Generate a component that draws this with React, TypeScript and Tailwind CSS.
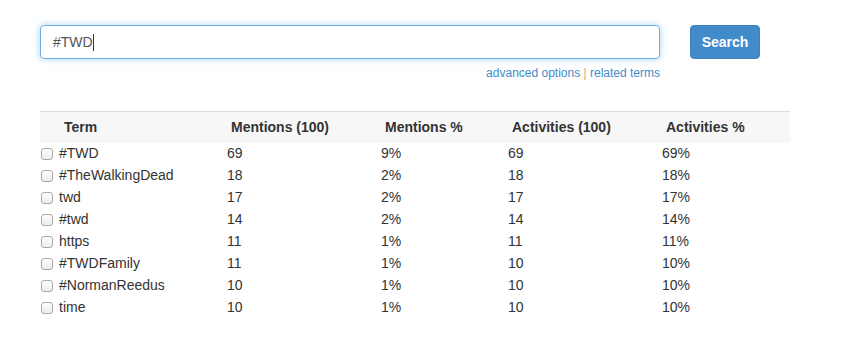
import React from "react";

const rows = [
  ["#TWD", "69", "9%", "69", "69%"],
  ["#TheWalkingDead", "18", "2%", "18", "18%"],
  ["twd", "17", "2%", "17", "17%"],
  ["#twd", "14", "2%", "14", "14%"],
  ["https", "11", "1%", "11", "11%"],
  ["#TWDFamily", "11", "1%", "10", "10%"],
  ["#NormanReedus", "10", "1%", "10", "10%"],
  ["time", "10", "1%", "10", "10%"],
];

export default function App() {
  return (
    <div className="w-[842px] h-[344px] bg-white text-[14px] text-[#333] font-['Liberation_Sans',Arial,sans-serif]">
      <div className="pt-[25px] pl-[40px] flex">
        <div className="flex flex-col items-end">
          <div className="w-[620px] h-[34px] border border-[#66afe9] rounded-[4px] shadow-[0_0_7px_rgba(102,175,233,0.55)] flex items-center pl-[12px] text-[#555]">
            <span>#TWD</span>
            <span className="w-px h-[17px] bg-[#333]" />
          </div>
          <div className="mt-[6px] text-[12px] text-[#428bca] leading-[16px]">
            advanced options <span className="text-[#e0a070]">|</span> related terms
          </div>
        </div>
        <button className="ml-[30px] w-[70px] h-[34px] rounded-[4px] bg-[#428bca] border border-[#3d82be] text-white font-bold text-[14px]">
          Search
        </button>
      </div>

      <table className="mt-[30px] ml-[40px] w-[750px] border-collapse table-fixed">
        <colgroup>
          <col className="w-[187px]" />
          <col className="w-[154px]" />
          <col className="w-[127px]" />
          <col className="w-[154px]" />
          <col className="w-[128px]" />
        </colgroup>
        <thead>
          <tr className="bg-[#f7f7f7] border-t border-[#ddd] h-[31px] font-bold text-left">
            <th className="pl-[24px] font-bold">Term</th>
            <th className="pl-[4px] font-bold">Mentions (100)</th>
            <th className="pl-[4px] font-bold">Mentions %</th>
            <th className="pl-[4px] font-bold">Activities (100)</th>
            <th className="pl-[4px] font-bold">Activities %</th>
          </tr>
        </thead>
        <tbody>
          {rows.map((r) => (
            <tr key={r[0]} className="h-[22px]">
              <td className="p-0">
                <div className="flex items-center">
                  <span className="ml-[1px] w-[12px] h-[12px] rounded-[3px] border border-[#a9a9a9] bg-gradient-to-b from-white to-[#ececec]" />
                  <span className="ml-[6px]">{r[0]}</span>
                </div>
              </td>
              <td className="p-0">{r[1]}</td>
              <td className="p-0">{r[2]}</td>
              <td className="p-0">{r[3]}</td>
              <td className="p-0">{r[4]}</td>
            </tr>
          ))}
        </tbody>
      </table>
    </div>
  );
}
